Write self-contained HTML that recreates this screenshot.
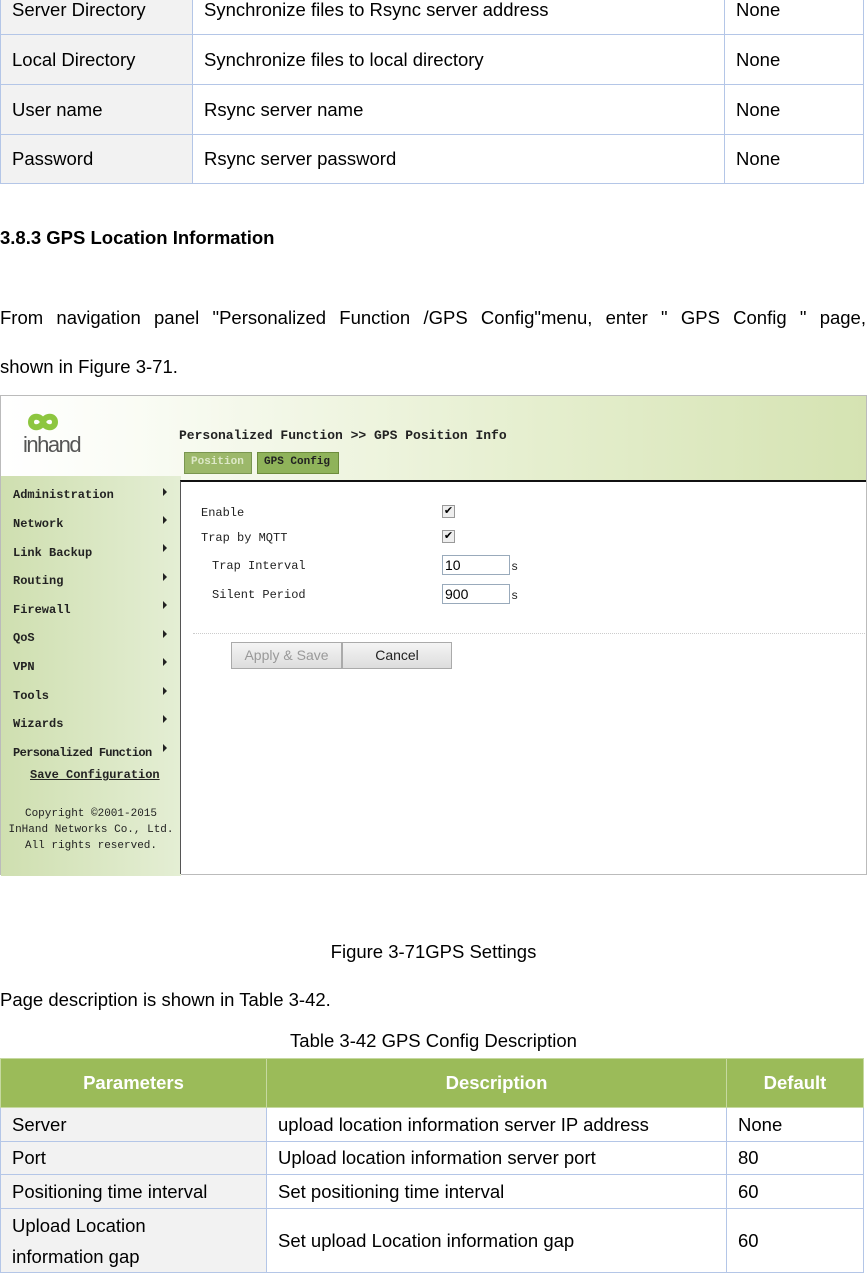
<!DOCTYPE html>
<html><head><meta charset="utf-8"><style>
*{margin:0;padding:0;box-sizing:border-box}
body{width:867px;height:1268px;overflow:hidden;background:#fff;font-family:"Liberation Sans",sans-serif;color:#000;position:relative}
.a{position:absolute;white-space:nowrap}
table{border-collapse:collapse;position:absolute;left:0;font-size:18.5px;letter-spacing:0}
td{border:1px solid #b4c6e7;padding:0 11px;vertical-align:middle}
td.g{background:#f2f2f2}
.t{font-size:18.5px}
.m{font-family:"Liberation Mono",monospace;font-weight:bold;font-size:12px;color:#222}
.side .m{position:absolute;left:12px}
.arr{position:absolute;left:162px;width:0;height:0;border-left:4px solid #222;border-top:4px solid transparent;border-bottom:4px solid transparent}
.cb{position:absolute;width:13px;height:13px;border:1px solid #999;background:#eee;font-size:11px;line-height:11px;text-align:center}
.in{position:absolute;width:68px;height:20px;border:1px solid #9ab;background:#fff;font-size:14px;padding-left:2px;line-height:18px}
</style></head><body>
<table style="top:-16px;width:864px">
<tr style="height:50px"><td class="g" style="width:192px">Server Directory</td><td style="width:532px">Synchronize files to Rsync server address</td><td>None</td></tr>
<tr style="height:50px"><td class="g">Local Directory</td><td>Synchronize files to local directory</td><td>None</td></tr>
<tr style="height:50px"><td class="g">User name</td><td>Rsync server name</td><td>None</td></tr>
<tr style="height:49px"><td class="g">Password</td><td>Rsync server password</td><td>None</td></tr>
</table>
<div class="a t" style="left:0;top:227px;font-weight:bold">3.8.3 GPS Location Information</div>
<div class="a t" style="left:0;top:307px;width:866px;white-space:normal;text-align:justify;text-align-last:justify">From navigation panel "Personalized Function /GPS Config"menu, enter " GPS Config " page,</div>
<div class="a t" style="left:0;top:356px">shown in Figure 3-71.</div>

<div class="a" style="left:0;top:395px;width:867px;height:480px;background:linear-gradient(90deg,#fff 0%,#fafcf5 15%,#e6efd0 60%,#d5e3b2 100%);border:1px solid #bbb">
 <div class="a side" style="left:0;top:80px;width:180px;height:400px;background:linear-gradient(90deg,#cfdfb0,#e4eed4)">
  <div class="m" style="top:12px">Administration</div><div class="arr" style="top:12px"></div>
  <div class="m" style="top:41px">Network</div><div class="arr" style="top:40px"></div>
  <div class="m" style="top:70px">Link Backup</div><div class="arr" style="top:68px"></div>
  <div class="m" style="top:98px">Routing</div><div class="arr" style="top:97px"></div>
  <div class="m" style="top:127px">Firewall</div><div class="arr" style="top:125px"></div>
  <div class="m" style="top:155px">QoS</div><div class="arr" style="top:154px"></div>
  <div class="m" style="top:184px">VPN</div><div class="arr" style="top:182px"></div>
  <div class="m" style="top:213px">Tools</div><div class="arr" style="top:211px"></div>
  <div class="m" style="top:241px">Wizards</div><div class="arr" style="top:239px"></div>
  <div class="m" style="top:270px;letter-spacing:-0.6px">Personalized Function</div><div class="arr" style="top:268px"></div>
  <div class="m" style="top:292px;left:29px;text-decoration:underline">Save Configuration</div>
  <div class="a" style="left:0;top:330px;width:180px;text-align:center;font-family:'Liberation Mono',monospace;font-size:11px;line-height:16px;color:#222">Copyright ©2001-2015<br>InHand Networks Co., Ltd.<br>All rights reserved.</div>
 </div>
 <svg class="a" style="left:24px;top:14px" width="36" height="24"><path d="M6 12c0-7 10-7 12 0s12 7 12 0-10-7-12 0-12 7-12 0" fill="none" stroke="#8dc63f" stroke-width="6"/></svg>
 <div class="a" style="left:22px;top:36px;font-size:22px;color:#555;letter-spacing:-1.5px">inhand</div>
 <div class="a m" style="left:178px;top:32px;font-size:13px">Personalized Function &gt;&gt; GPS Position Info</div>
 <div class="a m" style="left:183px;top:56px;width:68px;height:22px;background:#9cb86a;color:#dde8c8;padding:3px 6px;font-size:11px;border:1px solid #7a9650">Position</div>
 <div class="a m" style="left:256px;top:56px;width:82px;height:22px;background:#8fb35a;padding:3px 6px;font-size:11px;border:1px solid #6d8c3c">GPS Config</div>
 <div class="a" style="left:179px;top:84px;width:686px;height:394px;background:#fff;border-top:2px solid #111;border-left:1px solid #555">
  <div class="m" style="position:absolute;left:20px;top:24px;font-weight:normal">Enable</div>
  <div class="m" style="position:absolute;left:20px;top:49px;font-weight:normal">Trap by MQTT</div>
  <div class="m" style="position:absolute;left:31px;top:77px;font-weight:normal">Trap Interval</div>
  <div class="m" style="position:absolute;left:31px;top:106px;font-weight:normal">Silent Period</div>
  <div class="cb" style="left:261px;top:23px">✔</div>
  <div class="cb" style="left:261px;top:48px">✔</div>
  <div class="in" style="left:261px;top:73px">10</div><div class="m" style="position:absolute;left:330px;top:78px;font-weight:normal">s</div>
  <div class="in" style="left:261px;top:102px">900</div><div class="m" style="position:absolute;left:330px;top:107px;font-weight:normal">s</div>
  <div class="a" style="left:12px;top:151px;width:672px;border-top:1px dotted #ccc"></div>
  <div class="a" style="left:50px;top:160px;width:111px;height:27px;border:1px solid #aaa;background:linear-gradient(#f4f4f4,#ddd);color:#999;font-size:14px;text-align:center;line-height:25px">Apply &amp; Save</div>
  <div class="a" style="left:161px;top:160px;width:110px;height:27px;border:1px solid #aaa;background:linear-gradient(#f4f4f4,#ddd);color:#222;font-size:14px;text-align:center;line-height:25px">Cancel</div>
 </div>
</div>

<div class="a t" style="left:0;top:941px;width:867px;text-align:center">Figure 3-71GPS Settings</div>
<div class="a t" style="left:0;top:989px">Page description is shown in Table 3-42.</div>
<div class="a t" style="left:0;top:1030px;width:867px;text-align:center">Table 3-42 GPS Config Description</div>
<table style="top:1058px;width:864px">
<tr style="height:49px;background:#9bbb59;color:#fff;font-weight:bold;text-align:center"><td style="width:266px;border-color:#c6d9a0">Parameters</td><td style="width:460px;border-color:#c6d9a0">Description</td><td style="border-color:#c6d9a0">Default</td></tr>
<tr style="height:34px"><td class="g">Server</td><td>upload location information server IP address</td><td>None</td></tr>
<tr style="height:33px"><td class="g">Port</td><td>Upload location information server port</td><td>80</td></tr>
<tr style="height:34px"><td class="g">Positioning time interval</td><td>Set positioning time interval</td><td>60</td></tr>
<tr style="height:64px"><td class="g" style="line-height:31px">Upload Location<br>information gap</td><td>Set upload Location information gap</td><td>60</td></tr>
</table>
</body></html>
